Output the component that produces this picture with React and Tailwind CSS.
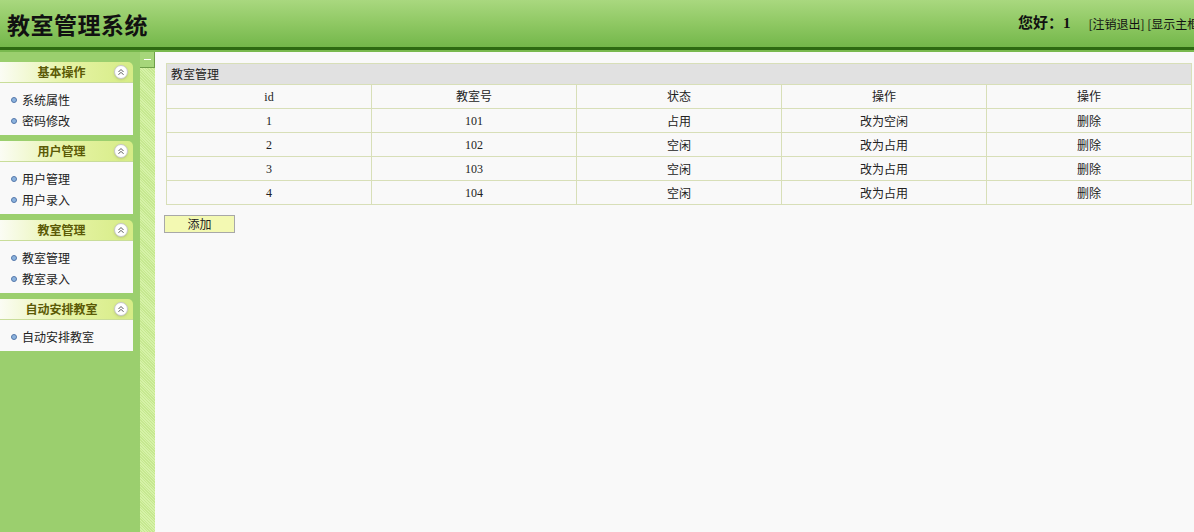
import React from 'react';

const cjk = { fontFamily: '"Liberation Serif", "Noto Sans CJK SC", serif' };
const sans = { fontFamily: '"Noto Sans CJK SC", sans-serif' };

const menus = [
  { title: '基本操作', items: ['系统属性', '密码修改'] },
  { title: '用户管理', items: ['用户管理', '用户录入'] },
  { title: '教室管理', items: ['教室管理', '教室录入'] },
  { title: '自动安排教室', items: ['自动安排教室'] },
];

const rooms = [
  { id: 1, no: 101, state: '占用', op: '改为空闲' },
  { id: 2, no: 102, state: '空闲', op: '改为占用' },
  { id: 3, no: 103, state: '空闲', op: '改为占用' },
  { id: 4, no: 104, state: '空闲', op: '改为占用' },
];

function Collapse() {
  return (
    <span className="w-[14px] h-[14px] rounded-full bg-white border border-[#c8c8c8] shadow-sm flex items-center justify-center">
      <svg width="8" height="8" viewBox="0 0 8 8" fill="none" stroke="#555" strokeWidth="1">
        <path d="M1.5 4 L4 1.5 L6.5 4 M1.5 6.8 L4 4.3 L6.5 6.8" />
      </svg>
    </span>
  );
}

function Panel({ title, items }) {
  return (
    <div className="w-[133px] mb-[6px]">
      <div className="h-[21px] rounded-tr-[5px] bg-gradient-to-r from-[#fbfcf4] via-[#e6f3a4] to-[#d6ec86] border-b border-[#c9dd9a] flex items-center relative">
        <span className="flex-1 text-center text-[12px] font-bold text-[#5b5a06] pr-[10px]" style={sans}>{title}</span>
        <span className="absolute right-[5px] top-[3px]"><Collapse /></span>
      </div>
      <div className="bg-[#f9f9f9] pt-[6px] pb-[4px]">
        {items.map((it) => (
          <div key={it} className="h-[21px] flex items-center pl-[11px] text-[12px] text-[#222]" style={sans}>
            <span className="w-[6px] h-[6px] rounded-full bg-[#8cb3de] border border-[#5577aa] mr-[5px]"></span>
            {it}
          </div>
        ))}
      </div>
    </div>
  );
}

export default function App() {
  return (
    <div className="w-[1194px] h-[532px] overflow-hidden flex flex-col bg-[#f9f9f9]" style={sans}>
      <header className="h-[47px] shrink-0 bg-gradient-to-b from-[#a9d87f] via-[#8fc863] to-[#73b74a] flex items-center pl-[7px]">
        <h1 className="text-[23px] font-bold text-[#111] tracking-[0.5px] mt-[2px]" style={sans}>教室管理系统</h1>
        <div className="ml-auto w-[176px] flex-none flex items-center whitespace-nowrap overflow-hidden">
          <span className="text-[15px] font-bold text-[#111]" style={cjk}>您好：1</span>
          <span className="text-[12px] text-[#111] ml-[18px]" style={sans}>[注销退出] [显示主框架]</span>
        </div>
      </header>
      <div className="h-[3px] bg-[#2d6a12] shrink-0"></div>
      <div className="h-[2px] bg-[#79b94e] shrink-0"></div>
      <div className="flex flex-1 min-h-0">
        <aside className="w-[140px] shrink-0 bg-[#9bcf6e] pt-[10px]">
          {menus.map((m) => (
            <Panel key={m.title} {...m} />
          ))}
        </aside>
        <div className="w-[15px] shrink-0 bg-[#cdec9c] bg-[repeating-linear-gradient(45deg,#d6f2a8_0px,#d6f2a8_1px,#c6e890_1px,#c6e890_2px)] flex flex-col">
          <div className="h-[16px] bg-[#a6d67a] border-r border-b border-[#6e9e48] flex items-center justify-center">
            <span className="w-[7px] h-[1px] bg-white"></span>
          </div>
        </div>
        <main className="flex-1 pl-[11px] pr-[2px] pt-[11px]">
          <table className="w-[1026px] border-collapse text-[12px] text-[#222] table-fixed" style={cjk}>
            <thead>
              <tr>
                <th colSpan={5} className="h-[21px] bg-[#e1e1e1] border border-[#d8dfb8] text-left font-normal pl-[4px]" style={sans}>教室管理</th>
              </tr>
              <tr>
                {['id', '教室号', '状态', '操作', '操作'].map((h, i) => (
                  <th key={i} className="h-[24px] border border-[#d8dfb8] font-normal text-center">{h}</th>
                ))}
              </tr>
            </thead>
            <tbody>
              {rooms.map((r) => (
                <tr key={r.id}>
                  <td className="h-[24px] border border-[#d8dfb8] text-center">{r.id}</td>
                  <td className="border border-[#d8dfb8] text-center">{r.no}</td>
                  <td className="border border-[#d8dfb8] text-center" style={sans}>{r.state}</td>
                  <td className="border border-[#d8dfb8] text-center" style={sans}>{r.op}</td>
                  <td className="border border-[#d8dfb8] text-center" style={sans}>删除</td>
                </tr>
              ))}
            </tbody>
          </table>
          <button className="mt-[10px] ml-[-2px] w-[71px] h-[18px] bg-[#f3f9b2] border border-[#a8a8a8] text-[12px] text-[#222] leading-none" style={sans}>添加</button>
        </main>
      </div>
    </div>
  );
}
